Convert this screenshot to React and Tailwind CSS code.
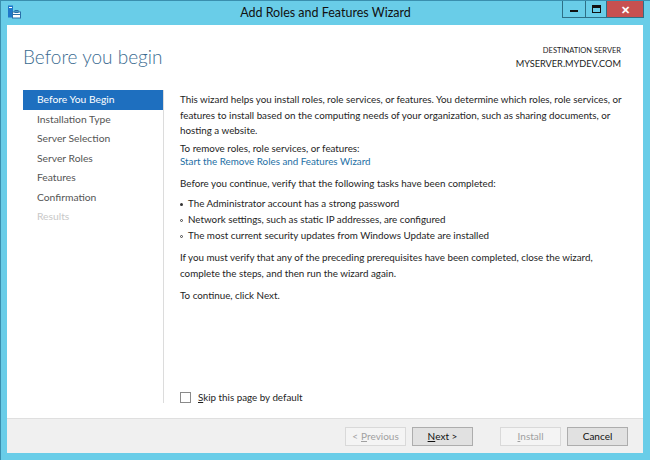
import React from 'react';

const steps = [
  'Before You Begin',
  'Installation Type',
  'Server Selection',
  'Server Roles',
  'Features',
  'Confirmation',
  'Results',
];

const tasks = [
  'The Administrator account has a strong password',
  'Network settings, such as static IP addresses, are configured',
  'The most current security updates from Windows Update are installed',
];

function AppIcon() {
  return (
    <svg width="14" height="14" viewBox="0 0 14 14">
      <rect x="1" y="0.5" width="5" height="12" fill="#1f77c9" />
      <rect x="2" y="2" width="3" height="1" fill="#fff" />
      <rect x="5.5" y="7" width="8" height="6" fill="#fff" stroke="#2a6ea8" strokeWidth="1" />
      <rect x="8" y="5.5" width="3" height="2" fill="none" stroke="#2a6ea8" strokeWidth="1" />
      <rect x="6" y="9" width="7" height="1" fill="#2a6ea8" />
    </svg>
  );
}

function Btn({ children, disabled, className = '' }) {
  return (
    <div
      className={`w-[61px] h-[19px] flex items-center justify-center border text-[10px] ${
        disabled ? 'border-[#d9d9d9] bg-[#f4f4f4] text-[#a0a0a0]' : 'border-[#adadad] bg-[#e1e1e1] text-[#111]'
      } ${className}`}
    >
      {children}
    </div>
  );
}

export default function App() {
  return (
    <div
      className="w-[650px] h-[460px] bg-[#69cde8] border-l border-t border-[#3a8fae] flex flex-col overflow-hidden"
      style={{ fontFamily: 'Lato, "Liberation Sans", sans-serif' }}
    >
      {/* title bar */}
      <div className="h-[24px] grid grid-cols-[1fr_auto_1fr] items-start shrink-0">
        <div className="pl-[6px] pt-[4px]">
          <AppIcon />
        </div>
        <div className="pt-[3px] text-[12.5px] text-[#111] leading-[18px]">Add Roles and Features Wizard</div>
        <div className="flex justify-end pr-[6px]">
          <div className="flex h-[17px] border border-t-0 border-[#2e6f86]">
            <div className="w-[23px] flex items-end justify-center pb-[5px] border-r border-[#2e6f86]">
              <div className="w-[8px] h-[2px] bg-[#111]" />
            </div>
            <div className="w-[21px] flex items-center justify-center border-r border-[#2e6f86]">
              <div className="w-[9px] h-[8px] border-[1.5px] border-t-[3px] border-[#111]" />
            </div>
            <div className="w-[36px] bg-[#c75050] flex items-center justify-center text-white text-[11px] font-bold leading-none">
              ✕
            </div>
          </div>
        </div>
      </div>

      {/* body */}
      <div className="flex-1 ml-[6px] mr-[7px] mb-[7px] bg-white flex flex-col">
        <div className="flex-1 flex flex-col">
          <div className="flex justify-between items-start pl-[16px] pr-[22px] pt-[19px] h-[65px]">
            <div className="text-[19px] font-light text-[#3b6c91] leading-[26px]">Before you begin</div>
            <div className="text-right pt-[1px]">
              <div className="text-[7.5px] leading-[12px] text-[#222]">DESTINATION SERVER</div>
              <div className="text-[9.2px] leading-[14px] text-[#222]">MYSERVER.MYDEV.COM</div>
            </div>
          </div>

          <div className="flex flex-1 pl-[16px]">
            <div className="w-[141px] border-r border-[#dcdcdc] mb-[15px]">
              {steps.map((s, i) => (
                <div
                  key={s}
                  className={`h-[19.5px] pl-[14px] flex items-center text-[10.3px] ${
                    i === 0 ? 'bg-[#1e6fbf] text-white' : i === 6 ? 'text-[#c8c8c8]' : 'text-[#555]'
                  }`}
                >
                  {s}
                </div>
              ))}
            </div>

            <div className="flex-1 pl-[16px] pr-[8px] text-[9.8px] leading-[15.5px] text-[#1e1e1e] flex flex-col whitespace-nowrap">
              <p className="pt-[2px]">
                This wizard helps you install roles, role services, or features. You determine which roles, role services, or
                <br />
                features to install based on the computing needs of your organization, such as sharing documents, or
                <br />
                hosting a website.
              </p>
              <p className="mt-[2.5px] leading-[14px]">To remove roles, role services, or features:</p>
              <p className="text-[#1d6fa5] leading-[12px]">Start the Remove Roles and Features Wizard</p>
              <p className="mt-[9px]">Before you continue, verify that the following tasks have been completed:</p>
              <ul className="mt-[4.5px]">
                {tasks.map((t, i) => (
                  <li key={t} className="flex items-center gap-[5px] h-[16px]">
                    <span
                      className={`w-[3px] h-[3px] rounded-full ${
                        i === 0 ? 'bg-[#333]' : 'border-[0.8px] border-[#444]'
                      }`}
                    />
                    {t}
                  </li>
                ))}
              </ul>
              <p className="mt-[6px]">
                If you must verify that any of the preceding prerequisites have been completed, close the wizard,
                <br />
                complete the steps, and then run the wizard again.
              </p>
              <p className="mt-[6.5px]">To continue, click Next.</p>

              <div className="mt-auto mb-[13px] flex items-center gap-[7px]">
                <div className="w-[11px] h-[11px] border border-[#8a8a8a] bg-white" />
                <span>
                  <u>S</u>kip this page by default
                </span>
              </div>
            </div>
          </div>
        </div>

        {/* footer */}
        <div className="h-[35px] shrink-0 bg-[#f0f0f0] border-t border-[#dfdfdf] flex items-center justify-end pr-[15px] pt-[1px]">
          <Btn disabled>
            &lt; <u className="ml-[3px]">P</u>revious
          </Btn>
          <Btn className="ml-[6px]">
            <u>N</u>ext &gt;
          </Btn>
          <Btn disabled className="ml-[27px]">
            <u>I</u>nstall
          </Btn>
          <Btn className="ml-[6px]">Cancel</Btn>
        </div>
      </div>
    </div>
  );
}
